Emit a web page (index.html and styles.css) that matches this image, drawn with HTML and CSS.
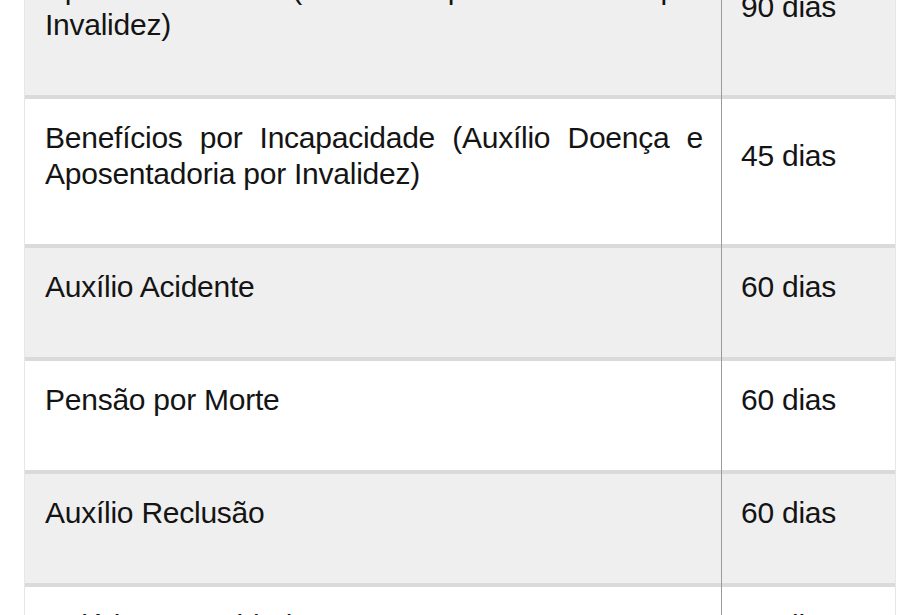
FILE: index.html
```html
<!DOCTYPE html>
<html lang="pt-BR">
<head>
<meta charset="utf-8">
<title>Prazos de concessão de benefícios</title>
<link rel="stylesheet" href="styles.css">
</head>
<body>
<div class="table">
  <div class="row shade">
    <div class="desc">Aposentadorias (exceto aposentadoria por Invalidez)</div>
    <div class="days">90 dias</div>
  </div>
  <div class="row">
    <div class="desc">Benefícios por Incapacidade (Auxílio Doença e Aposentadoria por Invalidez)</div>
    <div class="days">45 dias</div>
  </div>
  <div class="row shade">
    <div class="desc">Auxílio Acidente</div>
    <div class="days">60 dias</div>
  </div>
  <div class="row">
    <div class="desc">Pensão por Morte</div>
    <div class="days">60 dias</div>
  </div>
  <div class="row shade">
    <div class="desc">Auxílio Reclusão</div>
    <div class="days">60 dias</div>
  </div>
  <div class="row">
    <div class="desc">Salário Maternidade</div>
    <div class="days">30 dias</div>
  </div>
</div>
</body>
</html>
```
FILE: styles.css
```css
html, body {
  margin: 0;
  padding: 0;
  background: #ffffff;
  overflow: hidden;
}

body {
  font-family: "Liberation Sans", Arial, sans-serif;
  font-size: 30px;
  line-height: 36px;
  letter-spacing: -0.25px;
  color: #141414;
}

.table {
  width: 870px;
  margin: -50px 0 0 24px;
  border-left: 1px solid #e6e6e6;
  border-right: 1px solid #e6e6e6;
  display: flex;
  flex-direction: column;
  gap: 4px;
  background:
    linear-gradient(to right, transparent 696px, #9a9a9a 696px, #9a9a9a 697px, transparent 697px),
    #dadada;
  padding-bottom: 4px;
}

.row {
  display: grid;
  grid-template-columns: 696px 174px;
  background: #ffffff;
}

.row.shade {
  background: #efefef;
}

.desc {
  padding: 21px 18px 52px 20px;
  text-align: justify;
}

.days {
  border-left: 1px solid #9a9a9a;
  padding: 21px 20px 52px 19px;
  display: flex;
  align-items: center;
}
```
